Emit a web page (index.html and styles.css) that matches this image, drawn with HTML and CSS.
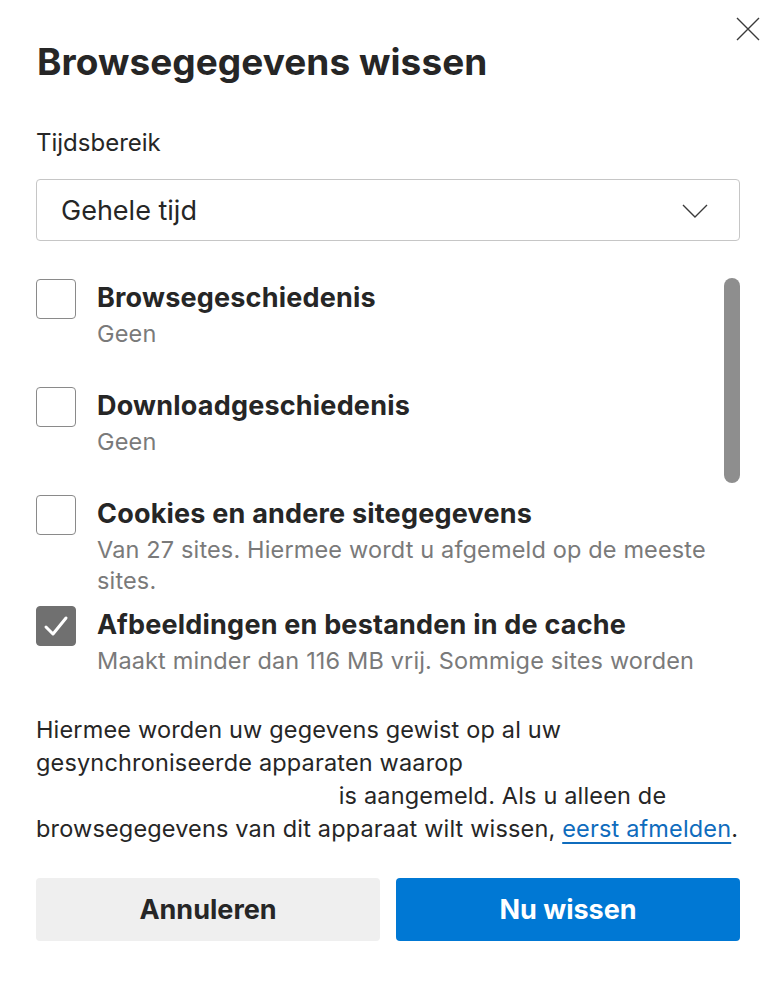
FILE: index.html
```html
<!DOCTYPE html>
<html lang="nl">
<head>
<meta charset="utf-8">
<title>Browsegegevens wissen</title>
<link rel="stylesheet" href="styles.css">
</head>
<body>
<div class="dialog">
  <header class="head">
    <h1 class="title">Browsegegevens wissen</h1>
    <button class="close" aria-label="Sluiten">
      <svg width="24" height="24" viewBox="0 0 24 24"><path d="M1 1 L23 23 M23 1 L1 23" stroke="#3a3a3a" stroke-width="1.4" fill="none"/></svg>
    </button>
  </header>

  <div class="field-label">Tijdsbereik</div>
  <div class="select">
    <span>Gehele tijd</span>
    <svg class="chev" width="26" height="14" viewBox="0 0 26 14"><path d="M1 1 L13 13 L25 1" stroke="#3a3a3a" stroke-width="1.4" fill="none"/></svg>
  </div>

  <div class="list-wrap">
    <div class="list">
      <div class="item">
        <span class="box"></span>
        <div class="text">
          <div class="label">Browsegeschiedenis</div>
          <div class="desc">Geen</div>
        </div>
      </div>
      <div class="item">
        <span class="box"></span>
        <div class="text">
          <div class="label">Downloadgeschiedenis</div>
          <div class="desc">Geen</div>
        </div>
      </div>
      <div class="item">
        <span class="box"></span>
        <div class="text">
          <div class="label">Cookies en andere sitegegevens</div>
          <div class="desc">Van 27 sites. Hiermee wordt u afgemeld op de meeste sites.</div>
        </div>
      </div>
      <div class="item">
        <span class="box checked">
          <svg width="26" height="22" viewBox="0 0 26 22"><path d="M3 12 L10 19 L23 3" stroke="#fff" stroke-width="3" fill="none" stroke-linecap="round" stroke-linejoin="round"/></svg>
        </span>
        <div class="text">
          <div class="label">Afbeeldingen en bestanden in de cache</div>
          <div class="desc">Maakt minder dan 116 MB vrij. Sommige sites worden</div>
        </div>
      </div>
    </div>
    <div class="thumb"></div>
  </div>

  <p class="note">Hiermee worden uw gegevens gewist op al uw gesynchroniseerde apparaten waarop <span class="blank"></span> is aangemeld. Als u alleen de browsegegevens van dit apparaat wilt wissen, <a href="#" class="link">eerst afmelden</a>.</p>

  <div class="actions">
    <button class="btn secondary">Annuleren</button>
    <button class="btn primary">Nu wissen</button>
  </div>
</div>
</body>
</html>
```

FILE: styles.css
```css
* { box-sizing: border-box; }
html, body { margin: 0; padding: 0; background: #fff; }
body {
  font-family: Inter, "Liberation Sans", Arial, sans-serif;
  color: #262626;
}
.dialog {
  width: 774px;
  height: 982px;
  padding: 0 34px 0 36px;
  display: flex;
  flex-direction: column;
}
.head {
  display: flex;
  justify-content: space-between;
  align-items: flex-start;
}
.title {
  margin: 38px 0 0 1px;
  font-size: 37px;
  line-height: 48px;
  font-weight: 700;
  letter-spacing: 0.05px;
  color: #262626;
}
.close {
  margin: 17px -20px 0 0;
  padding: 0;
  border: 0;
  background: none;
  width: 24px;
  height: 24px;
  display: block;
}
.close svg { display: block; }
.field-label {
  margin-top: 42px;
  font-size: 24px;
  line-height: 30px;
  color: #262626;
}
.select {
  margin-top: 21px;
  height: 62px;
  width: 704px;
  border: 1.5px solid #c6c6c6;
  border-radius: 4px;
  display: flex;
  align-items: center;
  justify-content: space-between;
  padding: 0 31px 0 24px;
  font-size: 27px;
}
.chev { display: block; margin-top: 2px; }
.list-wrap {
  position: relative;
  margin-top: 29px;
  height: 420px;
  width: 704px;
  overflow: hidden;
}
.list {
  display: flex;
  flex-direction: column;
  gap: 10px;
  padding-top: 9px;
}
.item {
  display: grid;
  grid-template-columns: 40px 1fr;
  column-gap: 21px;
  align-items: start;
  padding-right: 26px;
}
.box {
  width: 40px;
  height: 40px;
  border: 1.5px solid #8a8a8a;
  border-radius: 4px;
  display: flex;
  align-items: center;
  justify-content: center;
}
.box.checked {
  background: #707070;
  border-color: #707070;
}
.label {
  font-size: 27px;
  line-height: 38px;
  font-weight: 700;
  letter-spacing: 0.2px;
  color: #262626;
}
.desc {
  font-size: 23.5px;
  line-height: 31px;
  letter-spacing: 0.15px;
  padding-top: 1px;
  min-height: 60px;
  color: #7a7a7a;
}
.thumb {
  position: absolute;
  right: 0;
  top: 8px;
  width: 16px;
  height: 205px;
  border-radius: 8px;
  background: #8e8e8e;
}
.note {
  margin: 23px -8px 0 0;
  font-size: 23.5px;
  line-height: 33px;
  letter-spacing: 0.16px;
  color: #262626;
}
.blank {
  display: inline-block;
  width: 296px;
  height: 1px;
}
.link {
  color: #0f6cbd;
  text-decoration: underline;
  text-decoration-thickness: 2px;
  text-underline-offset: 5px;
}
.actions {
  margin-top: 33px;
  display: grid;
  grid-template-columns: 1fr 1fr;
  column-gap: 16px;
  width: 704px;
}
.btn {
  height: 63px;
  border: 0;
  border-radius: 4px;
  font-family: inherit;
  font-size: 27px;
  font-weight: 700;
}
.btn.secondary { background: #efefef; color: #262626; }
.btn.primary { background: #0078d4; color: #fff; }
```
